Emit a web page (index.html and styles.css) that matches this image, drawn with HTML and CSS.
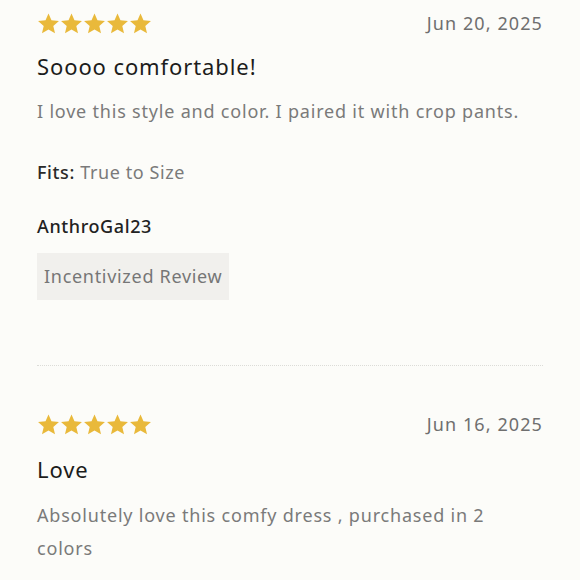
FILE: index.html
```html
<!DOCTYPE html>
<html>
<head>
<meta charset="utf-8">
<link rel="stylesheet" href="styles.css">
</head>
<body>
<div class="page">
  <section class="review">
    <div class="head">
      <div class="stars">
        <svg viewBox="0 0 24 24"><path d="M12 1.5l3.1 7.2 7.8.7-5.9 5.2 1.8 7.7L12 18.2l-6.8 4.1 1.8-7.7L1.1 9.4l7.8-.7z"/></svg>
        <svg viewBox="0 0 24 24"><path d="M12 1.5l3.1 7.2 7.8.7-5.9 5.2 1.8 7.7L12 18.2l-6.8 4.1 1.8-7.7L1.1 9.4l7.8-.7z"/></svg>
        <svg viewBox="0 0 24 24"><path d="M12 1.5l3.1 7.2 7.8.7-5.9 5.2 1.8 7.7L12 18.2l-6.8 4.1 1.8-7.7L1.1 9.4l7.8-.7z"/></svg>
        <svg viewBox="0 0 24 24"><path d="M12 1.5l3.1 7.2 7.8.7-5.9 5.2 1.8 7.7L12 18.2l-6.8 4.1 1.8-7.7L1.1 9.4l7.8-.7z"/></svg>
        <svg viewBox="0 0 24 24"><path d="M12 1.5l3.1 7.2 7.8.7-5.9 5.2 1.8 7.7L12 18.2l-6.8 4.1 1.8-7.7L1.1 9.4l7.8-.7z"/></svg>
      </div>
      <div class="date">Jun 20, 2025</div>
    </div>
    <h2 class="title">Soooo comfortable!</h2>
    <p class="body">I love this style and color. I paired it with crop pants.</p>
    <p class="fits"><span class="label">Fits:</span> True to Size</p>
    <p class="author">AnthroGal23</p>
    <div class="badge">Incentivized Review</div>
  </section>
  <hr class="divider">
  <section class="review second">
    <div class="head">
      <div class="stars">
        <svg viewBox="0 0 24 24"><path d="M12 1.5l3.1 7.2 7.8.7-5.9 5.2 1.8 7.7L12 18.2l-6.8 4.1 1.8-7.7L1.1 9.4l7.8-.7z"/></svg>
        <svg viewBox="0 0 24 24"><path d="M12 1.5l3.1 7.2 7.8.7-5.9 5.2 1.8 7.7L12 18.2l-6.8 4.1 1.8-7.7L1.1 9.4l7.8-.7z"/></svg>
        <svg viewBox="0 0 24 24"><path d="M12 1.5l3.1 7.2 7.8.7-5.9 5.2 1.8 7.7L12 18.2l-6.8 4.1 1.8-7.7L1.1 9.4l7.8-.7z"/></svg>
        <svg viewBox="0 0 24 24"><path d="M12 1.5l3.1 7.2 7.8.7-5.9 5.2 1.8 7.7L12 18.2l-6.8 4.1 1.8-7.7L1.1 9.4l7.8-.7z"/></svg>
        <svg viewBox="0 0 24 24"><path d="M12 1.5l3.1 7.2 7.8.7-5.9 5.2 1.8 7.7L12 18.2l-6.8 4.1 1.8-7.7L1.1 9.4l7.8-.7z"/></svg>
      </div>
      <div class="date">Jun 16, 2025</div>
    </div>
    <h2 class="title">Love</h2>
    <p class="body">Absolutely love this comfy dress , purchased in 2 colors</p>
  </section>
</div>
</body>
</html>
```

FILE: styles.css
```css
html, body {
  margin: 0;
  padding: 0;
  background: #fcfcf9;
}
body {
  font-family: "Noto Sans", "DejaVu Sans", sans-serif;
  color: #222;
  overflow: hidden;
}
.page {
  padding: 11px 37px 0 37px;
  width: 506px;
}
.review {
  display: flex;
  flex-direction: column;
}
.head {
  display: flex;
  justify-content: space-between;
  align-items: center;
  height: 24px;
}
.stars {
  display: flex;
  gap: 0;
}
.stars svg {
  width: 23px;
  height: 23px;
  fill: #e9b93b;
}
.date {
  font-size: 18px;
  color: #6f6f6f;
  letter-spacing: 1.1px;
}
.title {
  margin: 16px 0 0 0;
  font-size: 22px;
  font-weight: 400;
  color: #1c1c1c;
  line-height: 30px;
  letter-spacing: 0.9px;
}
.body {
  margin: 14px 0 0 0;
  font-size: 18px;
  line-height: 33px;
  color: #7a7a7a;
  letter-spacing: 0.8px;
}
.fits {
  margin: 31px 0 0 0;
  font-size: 18px;
  line-height: 26px;
  color: #7a7a7a;
  letter-spacing: 0.6px;
}
.fits .label {
  color: #2a2a2a;
  font-weight: 500;
}
.author {
  margin: 28px 0 0 0;
  font-size: 18px;
  line-height: 26px;
  font-weight: 500;
  color: #222;
  letter-spacing: 0.6px;
}
.badge {
  align-self: flex-start;
  margin-top: 14px;
  background: #f1f0ed;
  color: #767676;
  font-size: 18px;
  letter-spacing: 0.7px;
  padding: 0 7px;
  height: 47px;
  line-height: 46px;
}
.divider {
  margin: 65px 0 0 0;
  border: 0;
  border-top: 1px dotted #dcdcd8;
  height: 0;
}
.second .head {
  margin-top: 46px;
}
.second .title {
  margin-top: 18px;
}
.second .body {
  margin-top: 15px;
  max-width: 500px;
}
```
